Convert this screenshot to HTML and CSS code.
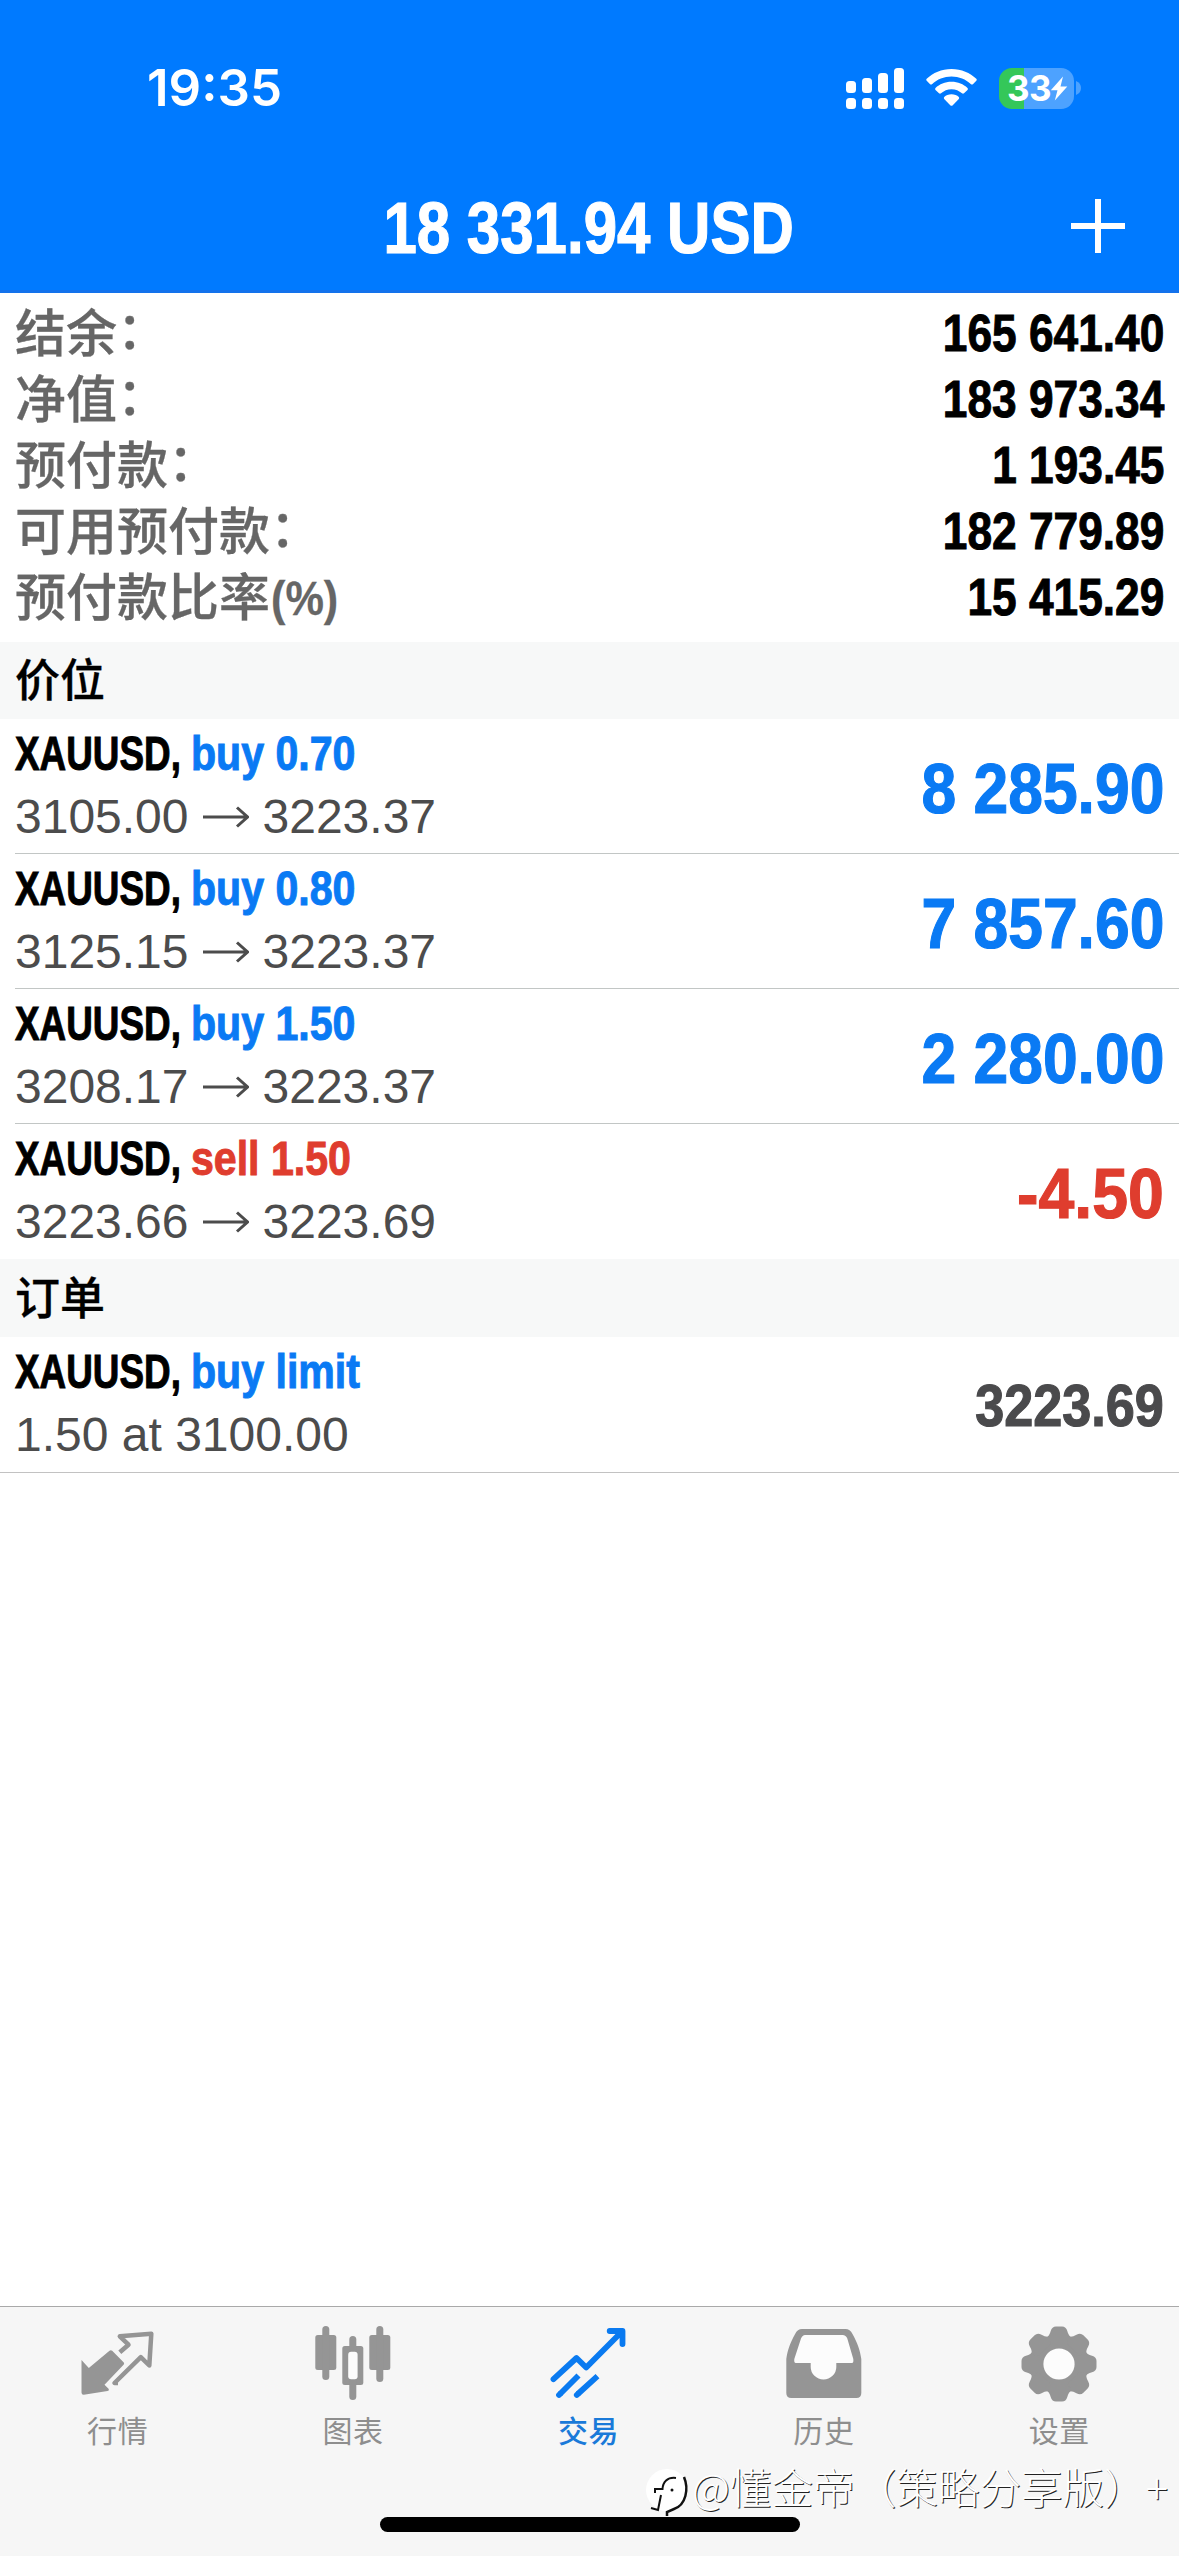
FILE: index.html
```html
<!DOCTYPE html>
<html lang="zh-CN">
<head>
<meta charset="utf-8">
<title>交易</title>
<link rel="stylesheet" href="styles.css">
</head>
<body>
<header class="header">
  <div class="status">
    <span class="time">19:35</span>
    <div class="status-icons">
      <svg class="signal" width="58" height="41" viewBox="0 0 58 41" fill="#fff">
        <rect x="0" y="13" width="10" height="12" rx="3.5"/><rect x="16" y="10" width="10" height="15" rx="3.5"/><rect x="32" y="5" width="10" height="20" rx="3.5"/><rect x="48" y="0" width="10" height="25" rx="3.5"/>
        <rect x="0" y="30" width="10" height="11" rx="3.5"/><rect x="16" y="30" width="10" height="11" rx="3.5"/><rect x="32" y="30" width="10" height="11" rx="3.5"/><rect x="48" y="30" width="10" height="11" rx="3.5"/>
      </svg>
      <svg class="wifi" width="51" height="38" viewBox="0 0 51 38" fill="#fff">
        <path d="M25.5 0C35.500 0 44 3.800 50.300 9.800Q51.200 10.800 50.300 11.800L46.900 15.200Q46 16 45 15.200C39.800 10.400 33 7.600 25.500 7.600S11.200 10.400 6 15.200Q5 16 4.100 15.200L.7 11.800Q-.2 10.800 .7 9.800C7 3.800 15.500 0 25.500 0Z"/>
        <path d="M25.500 12.700C32 12.700 37.500 15.200 41.500 18.900Q42.400 19.900 41.500 20.900L38 24.300Q37 25.200 36 24.300C33.200 21.800 29.600 20.200 25.500 20.200S17.800 21.800 15 24.300Q14 25.200 13 24.300L9.500 20.900Q8.600 19.900 9.500 18.900C13.500 15.200 19 12.700 25.500 12.700Z"/>
        <path d="M25.500 25.300C28.500 25.300 31 26.400 32.800 28Q33.600 29 32.800 29.900L26.500 36.400Q25.500 37.300 24.500 36.400L18.200 29.900Q17.400 29 18.200 28C20 26.400 22.500 25.300 25.500 25.300Z"/>
      </svg>
      <div class="battery">
        <div class="battery-body"><span class="battery-text">33</span>
          <svg width="18" height="25" viewBox="0 0 18 25" fill="#fff"><path d="M13 .5L.8 14.200H7.500L4.800 24.500L17.300 10.500H10.500Z"/></svg>
        </div>
        <svg class="battery-nub" width="5" height="14" viewBox="0 0 5 14" fill="#4da2ff"><path d="M0 0Q5 2 5 7T0 14Z"/></svg>
      </div>
    </div>
  </div>
  <div class="nav">
    <h1 class="title">18 331.94 USD</h1>
    <svg class="add" width="54" height="54" viewBox="0 0 54 54" stroke="#fff" stroke-width="6"><path d="M27 0V54M0 27H54"/></svg>
  </div>
</header>

<main class="main">
  <dl class="summary">
    <div class="summary-row"><dt>结余<span class="colon">：</span></dt><dd>165 641.40</dd></div>
    <div class="summary-row"><dt>净值<span class="colon">：</span></dt><dd>183 973.34</dd></div>
    <div class="summary-row"><dt>预付款<span class="colon">：</span></dt><dd>1 193.45</dd></div>
    <div class="summary-row"><dt>可用预付款<span class="colon">：</span></dt><dd>182 779.89</dd></div>
    <div class="summary-row"><dt>预付款比率<span class="percent">(%)</span></dt><dd>15 415.29</dd></div>
  </dl>

  <h2 class="section positions-title">价位</h2>
  <div class="list">
    <div class="item">
      <div class="info">
        <div class="name"><span class="symbol">XAUUSD,</span><span class="action buy">buy 0.70</span></div>
        <div class="prices">3105.00<svg class="arrow" width="46" height="22" viewBox="0 0 46 22"><path d="M0 11H44M34 1.500L44.500 11L34 20.500"/></svg>3223.37</div>
      </div>
      <div class="amount buy">8 285.90</div>
    </div>
    <div class="item">
      <div class="info">
        <div class="name"><span class="symbol">XAUUSD,</span><span class="action buy">buy 0.80</span></div>
        <div class="prices">3125.15<svg class="arrow" width="46" height="22" viewBox="0 0 46 22"><path d="M0 11H44M34 1.500L44.500 11L34 20.500"/></svg>3223.37</div>
      </div>
      <div class="amount buy">7 857.60</div>
    </div>
    <div class="item">
      <div class="info">
        <div class="name"><span class="symbol">XAUUSD,</span><span class="action buy">buy 1.50</span></div>
        <div class="prices">3208.17<svg class="arrow" width="46" height="22" viewBox="0 0 46 22"><path d="M0 11H44M34 1.500L44.500 11L34 20.500"/></svg>3223.37</div>
      </div>
      <div class="amount buy">2 280.00</div>
    </div>
    <div class="item">
      <div class="info">
        <div class="name"><span class="symbol">XAUUSD,</span><span class="action sell">sell 1.50</span></div>
        <div class="prices">3223.66<svg class="arrow" width="46" height="22" viewBox="0 0 46 22"><path d="M0 11H44M34 1.500L44.500 11L34 20.500"/></svg>3223.69</div>
      </div>
      <div class="amount loss sell">-4.50</div>
    </div>
  </div>

  <h2 class="section orders-title">订单</h2>
  <div class="list orders">
    <div class="item">
      <div class="info">
        <div class="name"><span class="symbol">XAUUSD,</span><span class="action buy">buy limit</span></div>
        <div class="prices">1.50 at 3100.00</div>
      </div>
      <div class="amount quote">3223.69</div>
    </div>
  </div>
</main>

<nav class="tabs">
  <a class="tab">
    <svg width="76" height="76" viewBox="0 0 76 76"><path fill="#959595" d="M1.500 34L8.800 42L29.500 24.800Q30.800 23.500 32.200 24.800L43.800 36.500Q44.600 37.700 43.600 38.800L24.500 58.700L28.800 63Q29.300 64.800 27.500 65L3.800 68.700Q1.500 68.800 1.500 66.500Z"/><path fill="none" stroke="#959595" stroke-width="4.500" stroke-linejoin="round" d="M39.800 26.300L48.500 18.700L39.800 10.300L71.300 7.800L69.300 39.500L60.800 31.200L34.500 57H38"/></svg>
    <span>行情</span>
  </a>
  <a class="tab">
    <svg width="76" height="76" viewBox="0 0 76 76" fill="#959595"><rect x=".3" y="9" width="21" height="35" rx="2.500"/><rect x="7.300" y="0" width="7" height="54" rx="3.500"/><rect x="27.300" y="20" width="21" height="39" rx="2.500"/><rect x="34.300" y="10" width="7" height="64" rx="3.500"/><rect x="33.200" y="25.700" width="9.400" height="27.600" rx="3" fill="#fcfcfc"/><rect x="54.300" y="9" width="21" height="35" rx="2.500"/><rect x="61.300" y="0" width="7" height="56" rx="3.500"/></svg>
    <span>图表</span>
  </a>
  <a class="tab active">
    <svg width="76" height="76" viewBox="0 0 76 76" fill="none" stroke="#0a7af0" stroke-width="5.800" stroke-linejoin="round"><path stroke-linecap="round" d="M3.500 53.200L26.500 32L36.200 41.500L70.500 7M59.700 5H72.500V18"/><path fill="#0a7af0" stroke="none" d="M62 5H73V15Z"/><path d="M28.500 49.500L10 68M47.500 50.200L27.800 68"/><path stroke-linecap="round" d="M10 68L9 69M27.800 68L26.800 69"/></svg>
    <span>交易</span>
  </a>
  <a class="tab">
    <svg width="76" height="76" viewBox="0 0 76 76"><path fill="#959595" fill-rule="evenodd" d="M16 3H59.500Q64 3 66.500 8C71.500 17 74 24 75.300 33V67Q75.300 72 70.300 72H5.300Q.3 72 .3 67V33C1.600 24 4.100 17 9.100 8Q11.500 3 16 3Z"/><path fill="#fcfcfc" d="M19 9H56.500Q60 9 61.300 12.500L67.300 33Q67.800 37 66 37H50.300V41A12.800 12.500 0 0 1 24.700 41V37H9.800Q7.800 37 8.300 33L15 12.500Q16.500 9 19 9Z"/></svg>
    <span>历史</span>
  </a>
  <a class="tab">
    <svg width="76" height="76" viewBox="-38 -38 76 76" fill="#959595">
      <circle r="29.500"/>
      <g id="tooth"><path d="M-13 -26Q-9.500 -28 -8.300 -33Q-7 -37.500 -3 -37.500H3Q7 -37.500 8.300 -33Q9.500 -28 13 -26L8 -20H-8Z"/></g>
      <use href="#tooth" transform="rotate(45)"/><use href="#tooth" transform="rotate(90)"/><use href="#tooth" transform="rotate(135)"/><use href="#tooth" transform="rotate(180)"/><use href="#tooth" transform="rotate(225)"/><use href="#tooth" transform="rotate(270)"/><use href="#tooth" transform="rotate(315)"/>
      <circle r="15.600" fill="#fcfcfc"/>
    </svg>
    <span>设置</span>
  </a>
</nav>
<div class="home-bar"></div>
<div class="watermark">
  <svg width="46" height="52" viewBox="0 0 46 52"><circle cx="22" cy="23" r="21" fill="#fff"/><g fill="none" stroke="#111" stroke-width="2"><path d="M31 11C22 10 18 15 17.500 22H10V26M16 28L13 43L6 41"/><path d="M39 10C44 22 41 38 29 42L22 45V49" stroke-width="2.500"/></g><circle cx="27" cy="23" r="1.500" fill="#111"/></svg>
  <span>@懂金帝（策略分享版）+</span>
</div>
</body>
</html>
```
FILE: styles.css
```css
* { box-sizing: border-box; }

body {
  margin: 0;
  position: relative;
  width: 1179px;
  height: 2556px;
  overflow: hidden;
  display: flex;
  flex-direction: column;
  background: #fff;
  color: #000;
  font-family: "Liberation Sans", "Noto Sans CJK SC", sans-serif;
}

h1, h2, dl, dd { margin: 0; }
svg { display: block; flex: none; }

.header {
  height: 293px;
  background: #007aff;
  border-bottom: 3px solid #1372ec;
  color: #fff;
}

.status {
  height: 176px;
  padding: 0 98px 0 147px;
  display: flex;
  align-items: center;
  justify-content: space-between;
}

.time {
  font: 560 51px/60px Inter, sans-serif;
  letter-spacing: 0;
}

.status-icons { display: flex; align-items: center; }
.wifi { margin-left: 22px; }
.battery { display: flex; align-items: center; gap: 2px; margin-left: 22px; }

.battery-body {
  width: 75px;
  height: 41px;
  padding-left: 8px;
  border-radius: 13px;
  display: flex;
  align-items: center;
  background: linear-gradient(90deg, #34c759 25px, #4da2ff 25px);
}

.battery-text {
  width: 43px;
  font: 700 35px/41px Inter, sans-serif;
  letter-spacing: -0.5px;
}

.nav {
  height: 114px;
  padding: 1px 54px 0 0;
  display: grid;
  grid-template-columns: 1fr auto 1fr;
  align-items: start;
}

.title {
  grid-column: 2;
  margin-left: 52px;
  font-size: 73px;
  line-height: 101px;
  font-weight: 700;
  -webkit-text-stroke: 1.2px currentColor;
  transform: scaleX(0.822);
}

.add { justify-self: end; margin-top: 22px; }

.summary { height: 349px; padding: 7px 15px 0; }
.summary-row { height: 66px; display: flex; justify-content: space-between; line-height: 66px; }
.summary dt { padding-top: 2px; font-size: 51px; font-weight: 500; color: #666; -webkit-text-stroke: 0.3px currentColor; }
.summary dd {
  font-size: 52px;
  font-weight: 700;
  -webkit-text-stroke: 1px currentColor;
  transform: scaleX(0.851);
  transform-origin: right;
}

.colon { display: inline-block; transform: translate(0, -3px); }

.percent {
  display: inline-block;
  margin-left: 1px;
  font-size: 48px;
  font-weight: 700;
  transform: translateY(-1px) scaleX(0.9);
  transform-origin: left;
}

.section {
  padding: 3px 15px 0;
  background: #f7f8f8;
  font-size: 45px;
  font-weight: 500;
  -webkit-text-stroke: 0.3px currentColor;
}

.positions-title { height: 77px; line-height: 74px; }
.orders-title { height: 78px; padding-top: 4px; line-height: 74px; }

.item {
  height: 135px;
  margin-left: 15px;
  padding-right: 15px;
  display: flex;
  justify-content: space-between;
  border-bottom: 1px solid #c2c6c5;
}

.item:last-child { border-bottom-color: transparent; }
.orders .item { height: 136px; margin-left: 0; padding-left: 15px; border-bottom-color: #c2c2c2; }

.info { padding-top: 3px; font-size: 48px; line-height: 63px; }
.name { display: flex; font-weight: 700; -webkit-text-stroke: 1px currentColor; }
.symbol { width: 176px; white-space: nowrap; transform: scaleX(0.768); transform-origin: left; }
.symbol, .action { flex: none; }
.action { transform: scaleX(0.856); transform-origin: left; }
.prices { display: flex; align-items: center; color: #4c4c4c; }

.arrow { margin: 0 14px; fill: none; stroke: #4c4c4c; stroke-width: 3; }

.amount {
  padding-top: 5px;
  font-size: 71px;
  line-height: 129px;
  font-weight: 700;
  -webkit-text-stroke: 1.2px currentColor;
  transform: scaleX(0.879);
  transform-origin: right;
}

.loss { transform: scaleX(0.907); }

.quote {
  padding-top: 3px;
  font-size: 60px;
  line-height: 132px;
  color: #4a4a4c;
  transform: scaleX(0.87);
}

.buy { color: #0a7af4; }
.sell { color: #df3d2e; }

.tabs {
  height: 250px;
  margin-top: auto;
  padding: 19px 2px 0 0;
  display: grid;
  grid-template-columns: repeat(5, 1fr);
  background: #f6f6f6;
  border-top: 1px solid #a9a9a9;
}

.tab {
  display: flex;
  flex-direction: column;
  align-items: center;
  gap: 10px;
  color: #8e8e8e;
  font-size: 30px;
  line-height: 40px;
  letter-spacing: 0.6px;
}

.active { color: #1a7ad9; font-weight: 500; }

.home-bar {
  position: absolute;
  left: 380px;
  top: 2517px;
  width: 420px;
  height: 15px;
  border-radius: 8px;
  background: #000;
}

.watermark {
  position: absolute;
  left: 645px;
  top: 2467px;
  display: flex;
  gap: 1px;
  color: #fff;
  font: 300 41.600px/38px "Noto Sans CJK SC", sans-serif;
  text-shadow: 1px 1px 0 #222;
  white-space: nowrap;
}
```
